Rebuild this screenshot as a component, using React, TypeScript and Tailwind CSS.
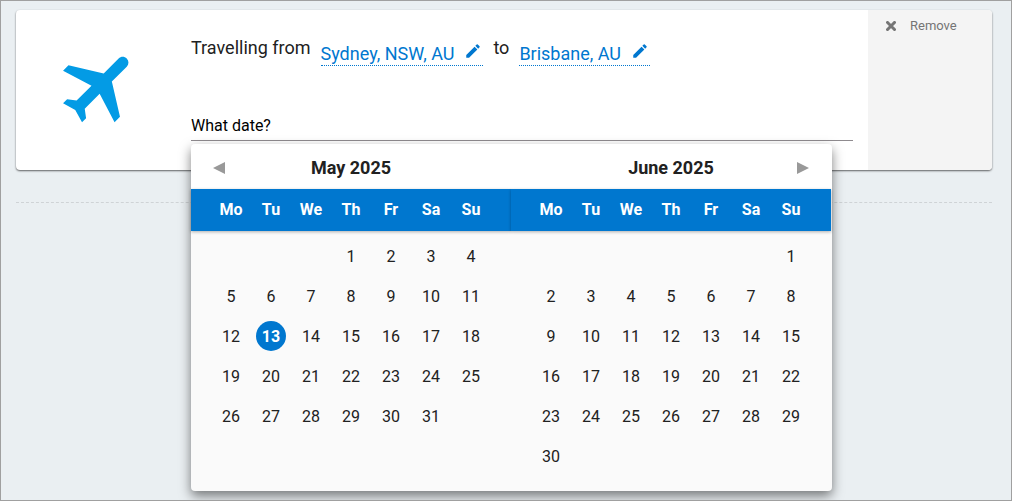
import { useState } from 'react';
import { MdEdit, MdFlight } from 'react-icons/md';

const WEEKDAYS = ['Mo', 'Tu', 'We', 'Th', 'Fr', 'Sa', 'Su'];

interface MonthProps {
  title: string;
  offset: number;
  days: number;
  selected?: number;
  onSelect: (day: number) => void;
  prev?: boolean;
  next?: boolean;
}

const buildWeeks = (offset: number, days: number) => {
  const weeks: (number | null)[][] = [];
  for (let start = 1 - offset; start <= days; start += 7) {
    weeks.push(
      WEEKDAYS.map((_, i) => {
        const day = start + i;
        return day >= 1 && day <= days ? day : null;
      })
    );
  }
  return weeks;
};

const Month = ({ title, offset, days, selected, onSelect, prev, next }: MonthProps) => (
  <section className="flex-1">
    <div className="flex h-[45px] items-center px-[22px] pt-[3px]">
      <div className="w-3">
        {prev && (
          <button type="button" aria-label="Previous month" className="block text-[#999]">
            <svg width="12" height="12" viewBox="0 0 12 12" fill="currentColor">
              <path d="M12 0v12L0 6z" />
            </svg>
          </button>
        )}
      </div>
      <h2 className="flex-1 text-center text-lg leading-6 font-bold text-[#212121]">{title}</h2>
      <div className="w-3">
        {next && (
          <button type="button" aria-label="Next month" className="block text-[#999]">
            <svg width="12" height="12" viewBox="0 0 12 12" fill="currentColor">
              <path d="M0 0v12l12-6z" />
            </svg>
          </button>
        )}
      </div>
    </div>
    <table className="block" aria-label={title}>
      <thead className="block">
        <tr className="flex h-[42px] items-center bg-[#0077cf] px-5 shadow-[0_1px_3px_rgba(0,0,0,0.3)]">
          {WEEKDAYS.map((name) => (
            <th key={name} scope="col" className="flex-1 text-center text-base leading-6 font-bold text-white">
              {name}
            </th>
          ))}
        </tr>
      </thead>
      <tbody className="block px-5 pt-[5px]">
        {buildWeeks(offset, days).map((week, i) => (
          <tr key={i} className="flex h-10 items-center">
            {week.map((day, j) => (
              <td key={j} className="flex flex-1 justify-center">
                {day && (
                  <button
                    type="button"
                    onClick={() => onSelect(day)}
                    className={
                      day === selected
                        ? 'size-[30px] rounded-full bg-[#0077cf] pt-px text-center text-base font-bold text-white'
                        : 'size-[30px] rounded-full pt-px text-center text-base text-[#212121]'
                    }
                  >
                    {day}
                  </button>
                )}
              </td>
            ))}
          </tr>
        ))}
      </tbody>
    </table>
  </section>
);

const PlaceLink = ({ children }: { children: string }) => (
  <a
    href="#"
    className="mt-[6px] flex h-6 items-center gap-[10px] border-b border-dotted border-[#0077cf] pr-px text-lg leading-6 text-[#0077cf]"
  >
    {children}
    <MdEdit size={18} className="-mt-1.5" />
  </a>
);

export default function App() {
  const [selected, setSelected] = useState({ month: 5, day: 13 });

  return (
    <main className="min-h-screen overflow-hidden border border-[#a0a0a0] bg-[#eaeff2] pt-[9px] pr-[19px] pl-[15px] font-['Roboto',sans-serif]">
      <div className="flex min-h-[160px] rounded bg-white shadow-[0_1px_2px_rgba(0,0,0,0.6)]">
        <div className="flex w-[175px] shrink-0 items-center justify-center pr-1.5 pb-1.5">
          <MdFlight size={92} className="rotate-45 text-[#039be5]" />
        </div>

        <div className="flex-1 pt-[26px] pr-[15px]">
          <div className="flex items-start gap-[10px] text-lg leading-6 text-[#212121]">
            <span>Travelling from</span>
            <PlaceLink>Sydney, NSW, AU</PlaceLink>
            <span>to</span>
            <PlaceLink>Brisbane, AU</PlaceLink>
          </div>

          <div className="relative mt-[45px]">
            <input
              type="text"
              aria-label="What date?"
              placeholder="What date?"
              className="block h-[30px] w-full border-b border-[#8f8b8f] text-base text-black outline-none placeholder:text-black"
            />
            <div className="absolute top-full left-0 z-10 mt-[3px] flex h-[347px] w-[641px] rounded bg-[#fafafa] bg-[linear-gradient(white_45px,transparent_45px)] pr-px shadow-[0_5px_12px_rgba(0,0,0,0.5)]">
              <Month
                title="May 2025"
                offset={3}
                days={31}
                selected={selected.month === 5 ? selected.day : undefined}
                onSelect={(day) => setSelected({ month: 5, day })}
                prev
              />
              <Month
                title="June 2025"
                offset={6}
                days={30}
                selected={selected.month === 6 ? selected.day : undefined}
                onSelect={(day) => setSelected({ month: 6, day })}
                next
              />
            </div>
          </div>
        </div>

        <div className="w-[124px] shrink-0 rounded-r bg-[#f4f4f4] px-[18px] pt-2">
          <button type="button" className="flex items-center gap-3.5 text-[13px] leading-4 text-[#757575]">
            <svg width="10" height="10" viewBox="0 0 10 10" fill="none" stroke="currentColor" strokeWidth="3">
              <path d="M1.5 1.5l7 7M8.5 1.5l-7 7" strokeLinecap="square" />
            </svg>
            Remove
          </button>
        </div>
      </div>

      <hr className="mt-8 border-t border-dashed border-[#cfd3d6]" />
    </main>
  );
}
